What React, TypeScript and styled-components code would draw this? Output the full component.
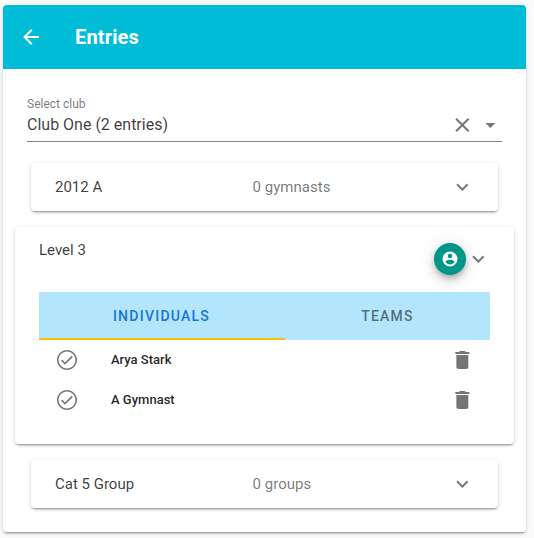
import React from "react";
import styled, { createGlobalStyle } from "styled-components";

const GlobalStyle = createGlobalStyle`
  *, *::before, *::after { box-sizing: border-box; }
  body {
    margin: 0;
    background: #fafafa;
    font-family: Roboto, "Liberation Sans", sans-serif;
    font-size: 16px;
    line-height: 1.5;
    color: rgba(0, 0, 0, 0.87);
  }
`;

const raised = `0 3px 1px -2px rgba(0,0,0,.2), 0 2px 2px 0 rgba(0,0,0,.14), 0 1px 5px 0 rgba(0,0,0,.12)`;

const icons = {
  back: "M20,11V13H8L13.5,18.5L12.08,19.92L4.16,12L12.08,4.08L13.5,5.5L8,11H20Z",
  close:
    "M19,6.41L17.59,5L12,10.59L6.41,5L5,6.41L10.59,12L5,17.59L6.41,19L12,13.41L17.59,19L19,17.59L13.41,12L19,6.41Z",
  menuDown: "M7,10L12,15L17,10H7Z",
  chevron: "M7.41,8.58L12,13.17L16.59,8.58L18,10L12,16L6,10L7.41,8.58Z",
  account:
    "M12,19.2C9.5,19.2 7.29,17.92 6,16C6.03,14 10,12.9 12,12.9C14,12.9 17.97,14 18,16C16.71,17.92 14.5,19.2 12,19.2M12,5A3,3 0 0,1 15,8A3,3 0 0,1 12,11A3,3 0 0,1 9,8A3,3 0 0,1 12,5M12,2A10,10 0 0,0 2,12A10,10 0 0,0 12,22A10,10 0 0,0 22,12C22,6.47 17.5,2 12,2Z",
  check:
    "M12 2C6.5 2 2 6.5 2 12S6.5 22 12 22 22 17.5 22 12 17.5 2 12 2M12 20.4C7.36 20.4 3.6 16.64 3.6 12S7.36 3.6 12 3.6 20.4 7.36 20.4 12 16.64 20.4 12 20.4M16.6 7.8L10 14.4L7.2 11.6L6 12.8L10 16.8L17.8 9L16.6 7.8Z",
  trash:
    "M19,4H15.5L14.5,3H9.5L8.5,4H5V6H19M6,19A2,2 0 0,0 8,21H16A2,2 0 0,0 18,19V7H6V19Z",
};

const Svg = styled.svg<{ $size: number }>`
  display: block;
  flex: none;
  width: ${(p) => p.$size}px;
  height: ${(p) => p.$size}px;
  fill: currentColor;
`;

function Icon({
  name,
  size = 24,
  trailing = false,
}: {
  name: keyof typeof icons;
  size?: number;
  trailing?: boolean;
}) {
  return (
    <Svg $size={size} viewBox={trailing ? "-0.35 0 24 24" : "0 0 24 24"} aria-hidden="true">
      <path d={icons[name]} />
    </Svg>
  );
}

const Card = styled.main`
  width: 523px;
  height: 527px;
  margin: 5px 0 6px 3px;
  background: #fff;
  border-radius: 4px;
  box-shadow: ${raised};
  display: flow-root;
`;

const Toolbar = styled.header`
  height: 64px;
  padding: 0 16px;
  display: flex;
  align-items: center;
  gap: 32px;
  background: #00bcd7;
  color: #fff;
  border-radius: 4px 4px 0 0;
`;

const Title = styled.h1`
  margin: 0;
  font-size: 20px;
  font-weight: 700;
  line-height: 30px;
  letter-spacing: 0.15px;
`;

const IconButton = styled.button`
  padding: 0;
  border: 0;
  background: none;
  color: inherit;
`;

const Select = styled.div`
  margin: 24px 24px 0;
  height: 49px;
  display: flex;
  align-items: flex-end;
  justify-content: space-between;
  border-bottom: 1px solid rgba(0, 0, 0, 0.48);
  color: rgba(0, 0, 0, 0.54);
`;

const SelectText = styled.div`
  display: flex;
  flex-direction: column;
  padding-bottom: 6px;
`;

const Label = styled.label`
  font-size: 12px;
  line-height: 16px;
  height: 19px;
  color: rgba(0, 0, 0, 0.54);
`;

const Value = styled.span`
  line-height: 20px;
  color: rgba(0, 0, 0, 0.77);
`;

const SelectActions = styled.div`
  display: flex;
  gap: 4px;
  padding-bottom: 4px;
`;

const Panels = styled.section`
  margin: 21px 12px 0;
  display: flex;
  flex-direction: column;
  gap: 16px;
`;

const Panel = styled.article<{ $open?: boolean }>`
  height: ${(p) => (p.$open ? "217px" : "48px")};
  margin: ${(p) => (p.$open ? "0" : "0 16px")};
  background: #fff;
  border-radius: 4px;
  box-shadow: ${raised};
`;

const PanelHeader = styled.header<{ $open?: boolean }>`
  height: ${(p) => (p.$open ? "64px" : "48px")};
  padding: 0 24px;
  display: grid;
  grid-template-columns: ${(p) => (p.$open ? "1fr 32px 24px" : "197.5px 1fr 24px")};
  align-items: center;
  color: rgba(0, 0, 0, 0.54);
`;

const PanelName = styled.span<{ $open?: boolean }>`
  align-self: ${(p) => (p.$open ? "start" : "center")};
  padding-top: ${(p) => (p.$open ? "12px" : "0")};
  font-size: 15px;
  color: rgba(0, 0, 0, 0.77);
`;

const Count = styled.span`
  font-size: 15px;
  letter-spacing: 0.04px;
  color: rgba(0, 0, 0, 0.54);
`;

const Fab = styled.button`
  width: 32px;
  height: 32px;
  padding: 0;
  border: 0;
  border-radius: 50%;
  display: grid;
  place-items: center;
  background: #009688;
  color: #fff;
  box-shadow: 0 3px 5px -1px rgba(0,0,0,.2), 0 6px 10px 0 rgba(0,0,0,.14), 0 1px 18px 0 rgba(0,0,0,.12);
`;

const Tabs = styled.div`
  margin: 1px 24px 0;
  height: 48px;
  display: grid;
  grid-template-columns: 246px 205px;
  background: #b3e5fc;
`;

const Tab = styled.button<{ $active?: boolean }>`
  padding: ${(p) => (p.$active ? "2px 1px 0 0" : "2px 0 0")};
  border: 0;
  border-bottom: 2px solid ${(p) => (p.$active ? "#ffc107" : "transparent")};
  background: none;
  font: 500 14px/20px Roboto, sans-serif;
  letter-spacing: 0.0892857143em;
  text-transform: uppercase;
  color: ${(p) => (p.$active ? "#1976d2" : "rgba(0, 0, 0, 0.54)")};
`;

const Members = styled.ul`
  margin: 0 24px;
  padding: 0;
  list-style: none;
`;

const Member = styled.li`
  height: 40px;
  padding: 0 16px;
  display: grid;
  grid-template-columns: 56px 1fr 24px;
  align-items: center;
  color: rgba(0, 0, 0, 0.54);
`;

const MemberName = styled.span`
  font-size: 13px;
  font-weight: 500;
  line-height: 16px;
  color: rgba(0, 0, 0, 0.87);
`;

const members = ["Arya Stark", "A Gymnast"];

function ClosedPanel({ name, count }: { name: string; count: string }) {
  return (
    <Panel>
      <PanelHeader>
        <PanelName>{name}</PanelName>
        <Count>{count}</Count>
        <Icon name="chevron" trailing />
      </PanelHeader>
    </Panel>
  );
}

export default function App() {
  return (
    <>
      <GlobalStyle />
      <Card>
        <Toolbar>
          <IconButton aria-label="Back">
            <Icon name="back" />
          </IconButton>
          <Title>Entries</Title>
        </Toolbar>
        <Select>
          <SelectText>
            <Label>Select club</Label>
            <Value>Club One (2 entries)</Value>
          </SelectText>
          <SelectActions>
            <Icon name="close" trailing />
            <Icon name="menuDown" trailing />
          </SelectActions>
        </Select>
        <Panels>
          <ClosedPanel name="2012 A" count="0 gymnasts" />
          <Panel $open>
            <PanelHeader $open>
              <PanelName $open>Level 3</PanelName>
              <Fab aria-label="Account">
                <Icon name="account" size={18} />
              </Fab>
              <Icon name="chevron" trailing />
            </PanelHeader>
            <Tabs>
              <Tab $active>Individuals</Tab>
              <Tab>Teams</Tab>
            </Tabs>
            <Members>
              {members.map((name) => (
                <Member key={name}>
                  <Icon name="check" />
                  <MemberName>{name}</MemberName>
                  <Icon name="trash" trailing />
                </Member>
              ))}
            </Members>
          </Panel>
          <ClosedPanel name="Cat 5 Group" count="0 groups" />
        </Panels>
      </Card>
    </>
  );
}
